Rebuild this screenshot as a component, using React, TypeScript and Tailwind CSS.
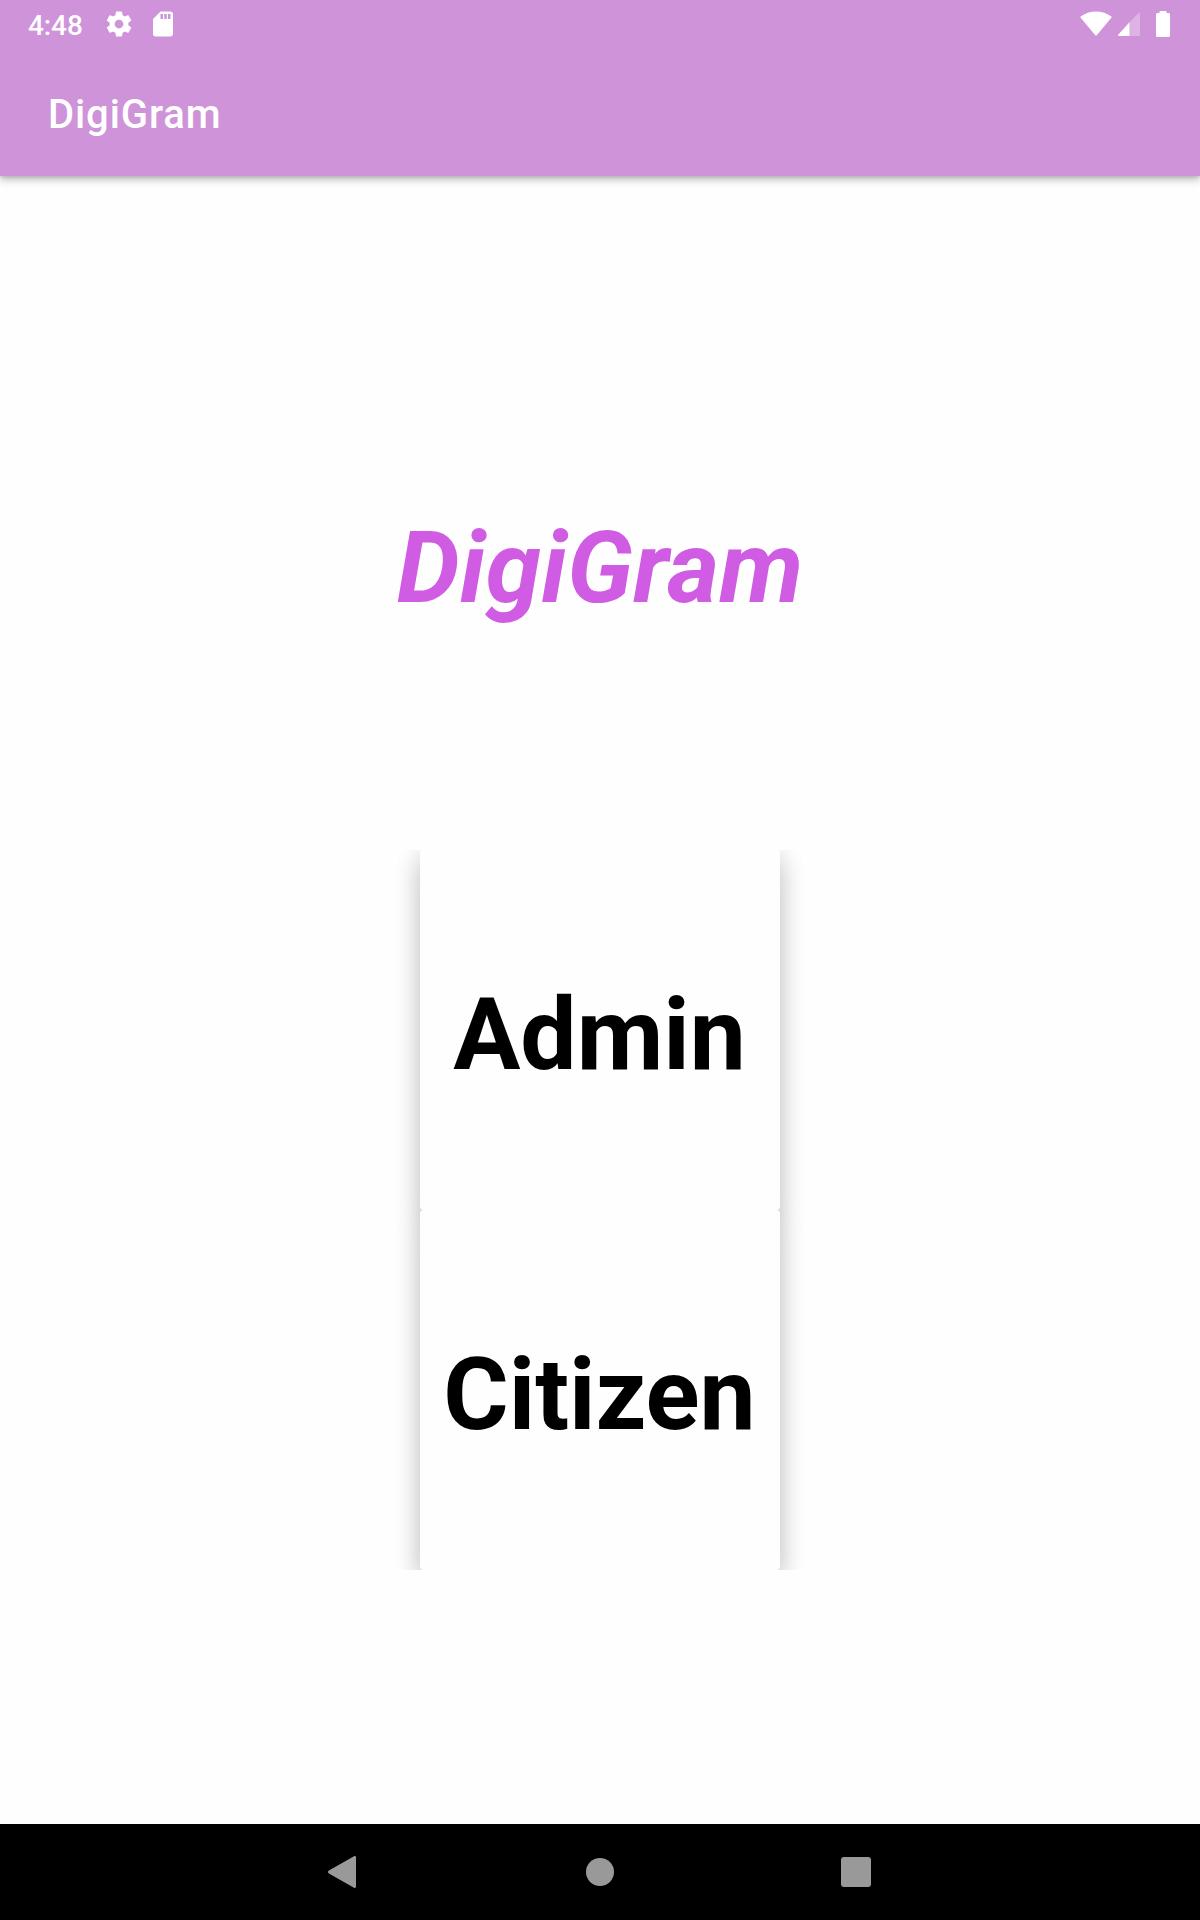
import type { ReactNode } from "react";

const APP_NAME = "DigiGram";

function StatusBar() {
  return (
    <div className="flex h-12 items-center justify-between pr-[30px] pl-7 text-white">
      <div className="flex h-12 items-center">
        <span className="w-[76px] pt-[3px] text-[28px] leading-[48px] font-medium tracking-[-0.1px]">4:48</span>
        <svg className="size-[30px]" viewBox="0 0 24 24" fill="currentColor">
          <path d="M19.43 12.98c.04-.32.07-.64.07-.98s-.03-.66-.07-.98l2.11-1.65c.19-.15.24-.42.12-.64l-2-3.46c-.12-.22-.39-.3-.61-.22l-2.49 1c-.52-.4-1.08-.73-1.69-.98l-.38-2.65C14.46 2.18 14.25 2 14 2h-4c-.25 0-.46.18-.49.42l-.38 2.65c-.61.25-1.17.59-1.69.98l-2.49-1c-.23-.09-.49 0-.61.22l-2 3.46c-.13.22-.07.49.12.64l2.11 1.65c-.04.32-.07.65-.07.98s.03.66.07.98l-2.11 1.65c-.19.15-.24.42-.12.64l2 3.46c.12.22.39.3.61.22l2.49-1c.52.4 1.08.73 1.69.98l.38 2.65c.03.24.24.42.49.42h4c.25 0 .46-.18.49-.42l.38-2.65c.61-.25 1.17-.59 1.69-.98l2.49 1c.23.09.49 0 .61-.22l2-3.46c.12-.22.07-.49-.12-.64l-2.11-1.65zM12 15.5c-1.93 0-3.5-1.57-3.5-3.5s1.57-3.5 3.5-3.5 3.5 1.57 3.5 3.5-1.57 3.5-3.5 3.5z" />
        </svg>
        <svg className="ml-[14px] size-[30px]" viewBox="0 0 24 24" fill="currentColor">
          <path d="M18 2h-8L4.02 8 4 20c0 1.100.9 2 2 2h12c1.100 0 2-.9 2-2V4c0-1.100-.9-2-2-2zm-6 6h-2V4h2v4zm3 0h-2V4h2v4zm3 0h-2V4h2v4z" />
        </svg>
      </div>
      <div className="flex h-12 items-center">
        <svg className="h-[26px] w-[32px]" viewBox="0 0 32 26" fill="currentColor">
          <path d="M.6 5.600C4.900 2.200 10.300.4 16 .4s11.100 1.800 15.400 5.200c.3.3.3.7.1 1L16.500 24.500c-.3.3-.7.3-1 0L.5 6.600c-.2-.3-.2-.7.1-1z" />
        </svg>
        <svg className="ml-[5px] h-[26px] w-[23px]" viewBox="0 0 23 26" fill="currentColor">
          <path d="M12.500 11.300 22 1.500c.4-.4 1-.2 1 .5V24c0 .6-.4 1-1 1h-9.500z" opacity=".3" />
          <path d="M12.500 11.300V25H1.600c-.6 0-.9-.7-.4-1.200z" />
        </svg>
        <svg className="ml-[16px] h-[26px] w-[14px]" viewBox="0 0 14 26" fill="currentColor">
          <path d="M12.500 2H10.500V1C10.500.4 10.300 0 9.500 0h-5C3.700 0 3.500.4 3.500 1v1h-2C.6 2 0 2.600 0 3.500v21C0 25.400.6 26 1.500 26h11c.9 0 1.500-.6 1.500-1.500v-21C14 2.600 13.400 2 12.500 2z" />
        </svg>
      </div>
    </div>
  );
}

// The shadow is a separate layer below every card face, so neighbouring faces stay clean.
function RoleCard({ children }: { children: ReactNode }) {
  return (
    <button className="relative flex size-[360px] items-center justify-center rounded bg-[#fefefe] pt-[9px] pr-[1px] text-[100px] leading-none font-bold text-black before:absolute before:inset-0 before:-z-10 before:rounded before:shadow-[0_16px_28px_rgba(0,0,0,0.17),0_0_24px_rgba(0,0,0,0.13)]">
      {children}
    </button>
  );
}

export default function App() {
  return (
    <div className="flex h-[1920px] w-[1200px] flex-col overflow-hidden bg-[#fefefe] font-[Roboto,sans-serif]">
      <header className="h-44 shrink-0 bg-[#ce93d8] shadow-[0_4px_8px_rgba(0,0,0,0.24),0_1px_4px_rgba(0,0,0,0.14)]">
        <StatusBar />
        <div className="flex h-32 items-center pt-[5px] pl-12 text-[40px] leading-none font-medium tracking-[0.9px] text-white">
          {APP_NAME}
        </div>
      </header>
      <main className="flex flex-1 flex-col items-center">
        <h1 className="mt-[333px] text-[100px] leading-[117px] font-bold tracking-[0.1px] text-[#d05ce3] italic">{APP_NAME}</h1>
        <div className="isolate mt-[224px] flex flex-col overflow-hidden px-12">
          <RoleCard>Admin</RoleCard>
          <RoleCard>Citizen</RoleCard>
        </div>
      </main>
      <nav className="flex h-24 shrink-0 items-center bg-black pl-[328px] text-[#999]">
        <svg className="h-8 w-7" viewBox="0 0 28 32" fill="currentColor">
          <path d="M26 .3.900 14.600c-1.200.7-1.200 2.100 0 2.800L26 31.700c1 .6 2 .1 2-1.200v-29C28 .2 27-.3 26 .3z" />
        </svg>
        <span className="ml-[230px] size-7 rounded-full bg-[#999]" />
        <span className="ml-[227px] size-[30px] rounded-[3px] bg-[#999]" />
      </nav>
    </div>
  );
}
